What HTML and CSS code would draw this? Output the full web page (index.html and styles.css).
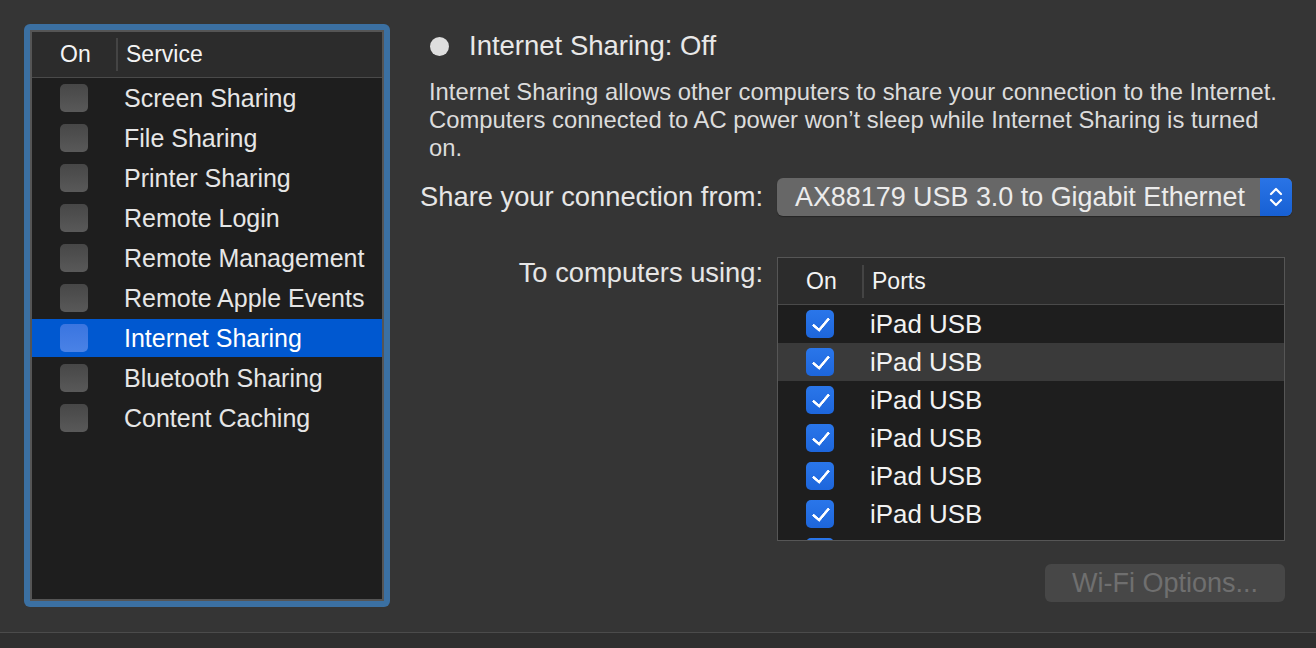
FILE: index.html
```html
<!DOCTYPE html>
<html lang="en">
<head>
  <meta charset="UTF-8" />
  <title>Sharing</title>
  <link rel="stylesheet" href="styles.css">
</head>
<body>
  <div class="pane">
    <div class="services">
      <div class="services-inner">
        <div class="table-head">
          <span class="col-on">On</span>
          <span class="col-name">Service</span>
        </div>
        <ul class="service-list">
          <li><span class="box"></span>Screen Sharing</li>
          <li><span class="box"></span>File Sharing</li>
          <li><span class="box"></span>Printer Sharing</li>
          <li><span class="box"></span>Remote Login</li>
          <li><span class="box"></span>Remote Management</li>
          <li><span class="box"></span>Remote Apple Events</li>
          <li class="selected"><span class="box"></span>Internet Sharing</li>
          <li><span class="box"></span>Bluetooth Sharing</li>
          <li><span class="box"></span>Content Caching</li>
        </ul>
      </div>
    </div>

    <div class="detail">
      <div class="status">
        <span class="dot"></span>
        <span>Internet Sharing: Off</span>
      </div>
      <p class="desc">Internet Sharing allows other computers to share your connection to the Internet.<br>
        Computers connected to AC power won’t sleep while Internet Sharing is turned<br>on.</p>

      <div class="form">
        <label class="form-label">Share your connection from:</label>
        <div class="popup">
          <span class="popup-text">AX88179 USB 3.0 to Gigabit Ethernet</span>
          <span class="stepper">
            <svg width="16" height="24" viewBox="0 0 16 24">
              <path d="M3 9 L8 4 L13 9" fill="none" stroke="#fff" stroke-width="2.2" stroke-linecap="round" stroke-linejoin="round"/>
              <path d="M3 15 L8 20 L13 15" fill="none" stroke="#fff" stroke-width="2.2" stroke-linecap="round" stroke-linejoin="round"/>
            </svg>
          </span>
        </div>

        <label class="form-label top">To computers using:</label>
        <div class="ports">
          <div class="table-head ports-head">
            <span class="col-on">On</span>
            <span class="col-name">Ports</span>
          </div>
          <ul class="port-list">
            <li><span class="check"></span>iPad USB</li>
            <li class="hover"><span class="check"></span>iPad USB</li>
            <li><span class="check"></span>iPad USB</li>
            <li><span class="check"></span>iPad USB</li>
            <li><span class="check"></span>iPad USB</li>
            <li><span class="check"></span>iPad USB</li>
            <li><span class="check"></span></li>
          </ul>
        </div>

        <span></span>
        <div class="actions">
          <button class="btn" disabled>Wi-Fi Options...</button>
        </div>
      </div>
    </div>
  </div>
  <div class="footer"></div>
</body>
</html>
```

FILE: styles.css
```css
body {
  margin: 0;
  height: 648px;
  overflow: hidden;
  background: #353535;
  font-family: "Liberation Sans", Arial, sans-serif;
  color: #e6e6e6;
}

.pane {
  display: flex;
  height: 632px;
  padding: 24px 0 0 24px;
  box-sizing: border-box;
}

/* left list with focus ring */
.services {
  width: 366px;
  height: 583px;
  box-sizing: border-box;
  padding: 6px;
  background: #3b70a2;
  border-radius: 6px;
}

.services-inner {
  height: 100%;
  box-sizing: border-box;
  border: 2px solid #555;
  background: #1e1e1e;
  overflow: hidden;
}

.table-head {
  display: flex;
  align-items: center;
  height: 45px;
  background: #2c2c2c;
  border-bottom: 1px solid #4a4a4a;
  font-size: 23px;
  color: #f4f4f4;
}

.col-on {
  width: 86px;
  box-sizing: border-box;
  padding-left: 28px;
  border-right: 2px solid #444;
  line-height: 33px;
}

.col-name {
  padding-left: 8px;
}

.service-list,
.port-list {
  list-style: none;
  margin: 0;
  padding: 0;
}

.service-list li {
  display: flex;
  align-items: center;
  height: 38px;
  border-top: 1px solid transparent;
  border-bottom: 1px solid transparent;
  background-clip: padding-box;
  font-size: 25px;
  color: #e6e6e6;
}

.service-list li.selected {
  background-color: #0058d0;
  color: #fff;
}

.box {
  width: 28px;
  height: 28px;
  margin: 0 36px 0 28px;
  border-radius: 5px;
  background: linear-gradient(#474747, #595959);
}

.selected .box {
  background: linear-gradient(#3a75e0, #4a82e6);
}

/* right side */
.detail {
  margin-left: 30px;
  width: 872px;
  padding-top: 6px;
}

.status {
  display: flex;
  align-items: center;
  padding-left: 10px;
  line-height: 32px;
  font-size: 27.5px;
  color: #e8e8e8;
}

.dot {
  width: 19px;
  height: 19px;
  border-radius: 50%;
  background: #dedede;
  margin-right: 20px;
}

.desc {
  margin: 16px 0 0 9px;
  font-size: 23.8px;
  line-height: 28px;
  color: #dcdcdc;
}

.form {
  display: grid;
  grid-template-columns: 343px 1fr;
  column-gap: 14px;
  margin-top: 16px;
  align-items: center;
}

.form-label {
  text-align: right;
  font-size: 27.3px;
  line-height: 32px;
  color: #e6e6e6;
}

.form-label.top {
  align-self: start;
  margin-top: 41px;
}

.popup {
  display: flex;
  align-items: center;
  width: 515px;
  height: 38px;
  border-radius: 6px;
  background: #676767;
  overflow: hidden;
  box-shadow: 0 1px 1px rgba(0, 0, 0, 0.3);
}

.popup-text {
  flex: 1;
  padding-left: 18px;
  font-size: 26.9px;
  color: #ececec;
}

.stepper {
  display: flex;
  align-items: center;
  justify-content: center;
  width: 32px;
  height: 100%;
  background: linear-gradient(#2a74e6, #1760d4);
}

.ports {
  width: 506px;
  height: 282px;
  margin-top: 41px;
  border: 1px solid #565656;
  background: #1e1e1e;
  overflow: hidden;
}

.ports-head {
  height: 46px;
}

.port-list li {
  display: flex;
  align-items: center;
  height: 38px;
  font-size: 25.9px;
  color: #f2f2f2;
}

.port-list li.hover {
  background: #3a3a3a;
}

.check {
  position: relative;
  width: 28px;
  height: 28px;
  margin: 0 36px 0 28px;
  border-radius: 5px;
  background: linear-gradient(#2a76ea, #1d66dc);
}

.check::after {
  content: "";
  position: absolute;
  left: 10px;
  top: 4px;
  width: 7px;
  height: 14px;
  border: solid #fff;
  border-width: 0 3px 3px 0;
  border-radius: 1px;
  transform: rotate(40deg);
}

.actions {
  display: flex;
  justify-content: flex-end;
  width: 508px;
  margin-top: 23px;
}

.btn {
  width: 240px;
  height: 38px;
  border: none;
  border-radius: 6px;
  background: #474747;
  color: #6f6f6f;
  font-family: inherit;
  font-size: 27px;
}

.footer {
  height: 16px;
  border-top: 1px solid #4b4b4b;
  background: #2f2f2f;
}
```
